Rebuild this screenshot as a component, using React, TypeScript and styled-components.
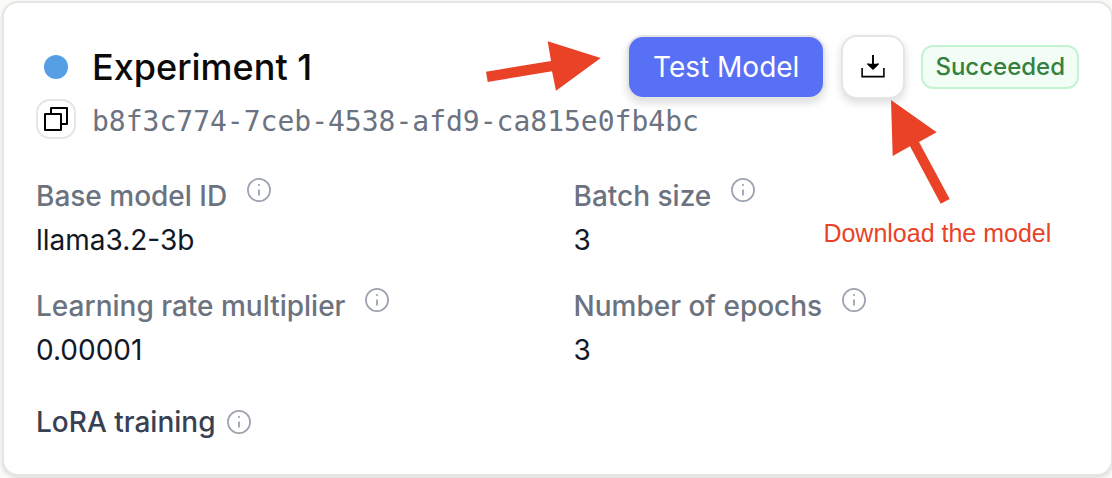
import React from "react";
import styled, { createGlobalStyle } from "styled-components";

const GlobalStyle = createGlobalStyle`
  *, *::before, *::after { box-sizing: border-box; }
  body {
    margin: 0;
    background: #fafaf9;
    font-family: Inter, "Liberation Sans", sans-serif;
    -webkit-font-smoothing: antialiased;
  }
`;

const Page = styled.main`
  padding: 1px 0 2px 2px;
  overflow: hidden;
`;

const Card = styled.article`
  margin-right: -1px;
  padding: 32px;
  background: #fff;
  border: 2px solid #e5e5e3;
  border-radius: 16px;
  box-shadow: 0 2px 4px rgba(0, 0, 0, 0.12);
`;

const Header = styled.header`
  display: flex;
  align-items: center;
  gap: 16px;
  min-height: 64px;
`;

const Leading = styled.span`
  display: flex;
  justify-content: center;
  flex: none;
  width: 40px;
`;

const StatusDot = styled.span`
  width: 24px;
  height: 24px;
  border-radius: 50%;
  background: #569fe5;
`;

const Title = styled.h1`
  flex: 1;
  margin: 0;
  font-size: 36px;
  line-height: 56px;
  font-weight: 500;
  color: #0c0a09;
`;

const Anchor = styled.div`
  position: relative;
  flex: none;
`;

const PrimaryButton = styled.button`
  display: block;
  height: 64px;
  padding: 0 24px;
  border: 2px solid #e5e5e3;
  border-radius: 16px;
  background: #5870f6;
  color: #fff;
  font: 400 28px/40px Inter, "Liberation Sans", sans-serif;
  box-shadow: 0 4px 8px rgba(0, 0, 0, 0.14);
`;

const IconButton = styled.button<{ $size: number; $raised?: boolean }>`
  display: flex;
  align-items: center;
  justify-content: center;
  flex: none;
  width: ${(p) => p.$size}px;
  height: ${(p) => p.$size}px;
  padding: 0;
  border: 2px solid #e5e5e5;
  border-radius: ${(p) => (p.$raised ? 16 : 14)}px;
  background: #fff;
  color: #000;
  box-shadow: ${(p) => (p.$raised ? "0 4px 8px rgba(0, 0, 0, 0.14)" : "none")};
`;

const Badge = styled.span`
  flex: none;
  padding: 0 12px;
  border: 2px solid #c3f3d2;
  border-radius: 12px;
  background: #f1fdf5;
  color: #36803f;
  font-size: 24px;
  line-height: 40px;
  font-weight: 500;
`;

const IdRow = styled.div`
  display: flex;
  align-items: flex-start;
  gap: 16px;
`;

const JobId = styled.code`
  font-family: "DejaVu Sans Mono", "Liberation Mono", monospace;
  font-size: 28px;
  line-height: 46px;
  color: #6b7280;
`;

const Details = styled.dl`
  display: grid;
  grid-template-columns: 1fr 1fr;
  gap: 26px 32px;
  margin: 31px 0 32px;
`;

const Field = styled.div`
  display: flex;
  flex-direction: column;
  gap: 4px;
`;

const Label = styled.dt`
  display: flex;
  align-items: flex-start;
  gap: 20px;
  font-size: 28px;
  line-height: 40px;
  font-weight: 500;
  color: #6b7280;
`;

const Value = styled.dd`
  margin: 0;
  font-size: 28px;
  line-height: 40px;
  color: #111827;
`;

const SectionTitle = styled.h2`
  display: flex;
  align-items: center;
  gap: 12px;
  margin: 0;
  font-size: 28px;
  line-height: 40px;
  font-weight: 500;
  color: #374151;
`;

const InfoSvg = styled.svg<{ $raised?: boolean }>`
  flex: none;
  margin-top: ${(p) => (p.$raised ? 2 : 0)}px;
  color: #9ca3af;
`;

const ButtonArrow = styled.svg`
  position: absolute;
  right: 224px;
  top: 4px;
  fill: #ea4226;
`;

const DownloadNote = styled.div`
  position: absolute;
  top: 64px;
  left: -18px;
  color: #ea4226;
  font: 25px/32px "Liberation Sans", Arial, sans-serif;
  white-space: nowrap;
  pointer-events: none;

  svg {
    display: block;
    margin: 0 0 12px 66px;
    fill: #ea4226;
  }
`;

const InfoIcon = ({ raised }: { raised?: boolean }) => (
  <InfoSvg $raised={raised} width="24" height="24" viewBox="0 0 24 24" fill="none" stroke="currentColor" aria-hidden="true">
    <circle cx="12" cy="12" r="11.1" strokeWidth="1.7" />
    <path d="M12 11.4v6" strokeWidth="1.8" />
    <path d="M12 6v2" strokeWidth="1.6" />
  </InfoSvg>
);

const CopyIcon = () => (
  <svg width="24" height="24" viewBox="0 0 24 24" fill="none" stroke="currentColor" strokeWidth="2" strokeLinejoin="round" aria-hidden="true">
    <path d="M1 7h16v16H1z" />
    <path d="M7 7V1h16v16h-6" />
  </svg>
);

const DownloadIcon = () => (
  <svg width="24" height="24" viewBox="0 0 24 24" fill="none" stroke="currentColor" strokeWidth="1.6" aria-hidden="true">
    <path d="M1.1 13v8.6h21.8V13" />
    <path d="M12 0v12" strokeWidth="1.9" />
    <path d="M6.2 8.2q5.8 1.2 11.6 0v1.2L12 15 6.2 9.4z" fill="currentColor" stroke="none" />
  </svg>
);

const fields = [
  { label: "Base model ID", value: "llama3.2-3b" },
  { label: "Batch size", value: "3" },
  { label: "Learning rate multiplier", value: "0.00001" },
  { label: "Number of epochs", value: "3" },
];

export default function App() {
  return (
    <>
      <GlobalStyle />
      <Page>
        <Card>
          <Header>
            <Leading>
              <StatusDot />
            </Leading>
            <Title>Experiment 1</Title>
            <Anchor>
              <PrimaryButton type="button">Test Model</PrimaryButton>
              <ButtonArrow width="116" height="52" viewBox="0 0 116 52" aria-hidden="true">
                <path d="M1 32.7 66 22 62.7 2.3 115.7 19 71 51.7 67 32.3 2.7 43z" />
              </ButtonArrow>
            </Anchor>
            <Anchor>
              <IconButton type="button" $size={64} $raised aria-label="Download">
                <DownloadIcon />
              </IconButton>
              <DownloadNote>
                <svg width="62" height="106" viewBox="0 0 62 106" aria-hidden="true">
                  <path d="M2 1 47.7 33.3 30 43 60.7 100 51.7 104.7 21 47.3 3.7 57z" />
                </svg>
                Download the model
              </DownloadNote>
            </Anchor>
            <Badge>Succeeded</Badge>
          </Header>
          <IdRow>
            <IconButton type="button" $size={40} aria-label="Copy ID">
              <CopyIcon />
            </IconButton>
            <JobId>b8f3c774-7ceb-4538-afd9-ca815e0fb4bc</JobId>
          </IdRow>
          <Details>
            {fields.map((f) => (
              <Field key={f.label}>
                <Label>
                  {f.label}
                  <InfoIcon raised />
                </Label>
                <Value>{f.value}</Value>
              </Field>
            ))}
          </Details>
          <SectionTitle>
            LoRA training
            <InfoIcon />
          </SectionTitle>
        </Card>
      </Page>
    </>
  );
}
